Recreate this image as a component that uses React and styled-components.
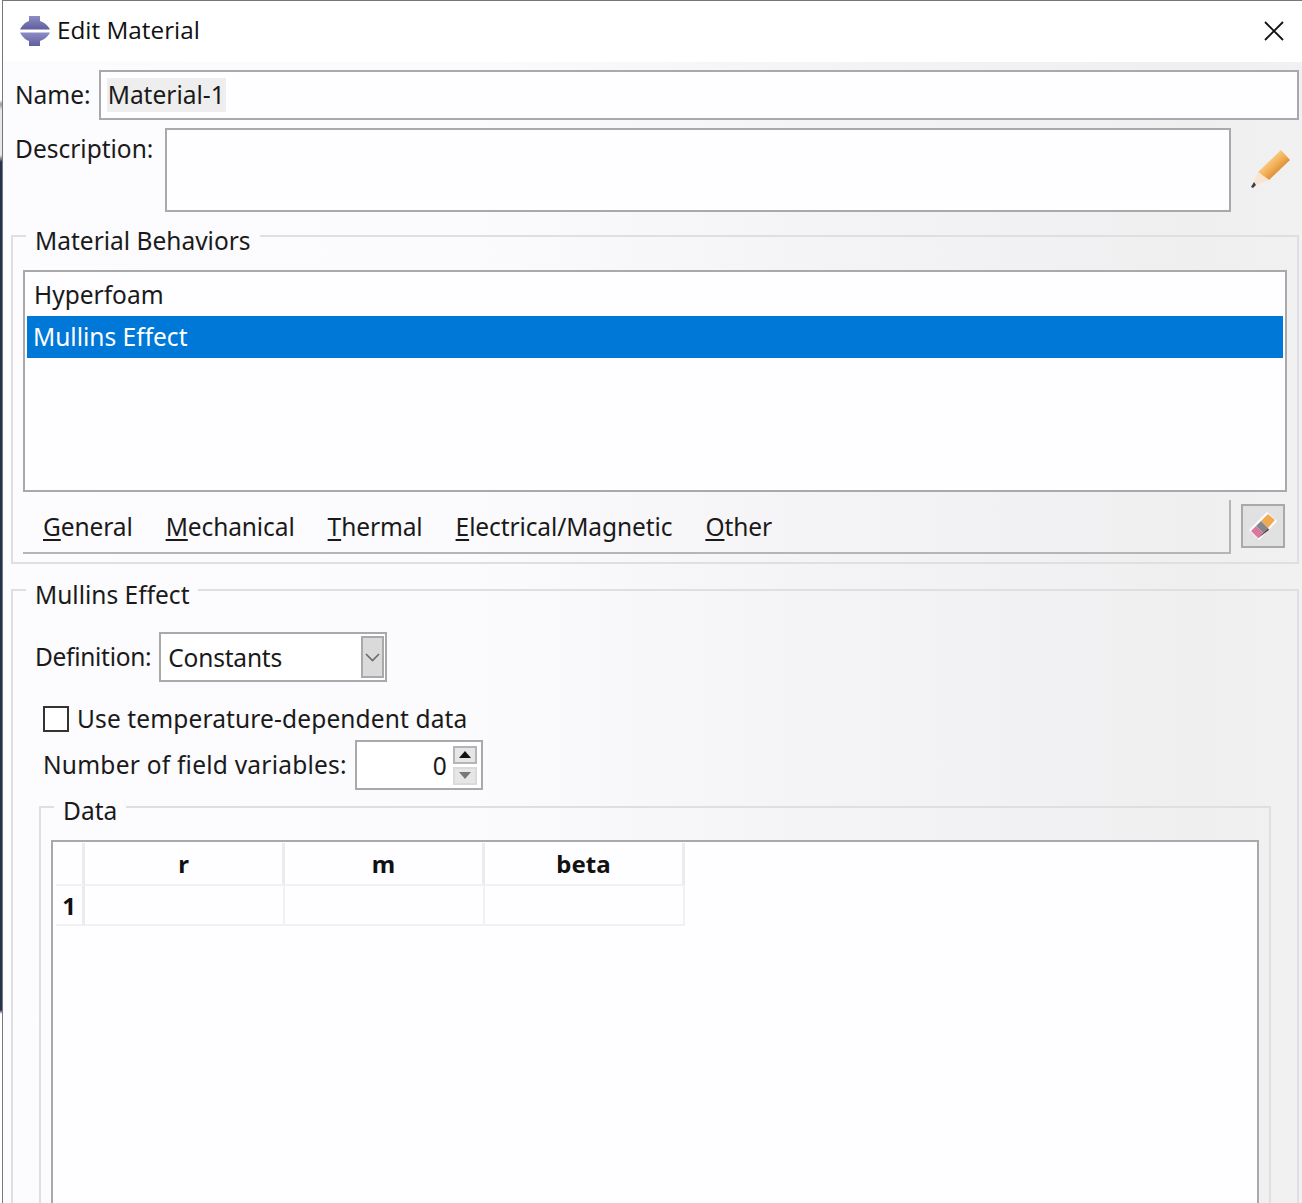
import React from 'react';
import styled, {createGlobalStyle} from 'styled-components';

const GlobalStyle = createGlobalStyle`
  html, body {
    margin: 0;
    padding: 0;
    overflow: hidden;
    background: #ffffff;
  }
  * {
    box-sizing: border-box;
  }
`;

const Page = styled.div`
  display: flex;
  width: 1302px;
  height: 1203px;
  overflow: hidden;
  font-family: "Noto Sans", "Liberation Sans", sans-serif;
  font-size: 24.5px;
  color: #1a1a1a;
`;

const DesktopEdge = styled.div`
  flex: 0 0 2px;
  background: linear-gradient(
    to bottom,
    #ffffff 0,
    #ffffff 100px,
    #9a9a9a 104px,
    #e8e8e8 110px,
    #e8e8e8 155px,
    #27324c 162px,
    #27324c 1010px,
    #ffffff 1014px
  );
`;

const Dialog = styled.div`
  flex: 1;
  display: flex;
  flex-direction: column;
  min-width: 0;
  border-left: 1px solid #77777b;
  border-top: 1px solid #77777b;
`;

const TitleBar = styled.div`
  flex: 0 0 61px;
  display: flex;
  align-items: center;
  padding: 0 18px 1px 17px;
  background: #ffffff;
`;

const Title = styled.div`
  flex: 1;
  margin: 0 0 3px 7px;
  font-family: "Open Sans", "Noto Sans", sans-serif;
  font-size: 24.3px;
  color: #111111;
`;

const Body = styled.div`
  flex: 1;
  display: flex;
  flex-direction: column;
  min-height: 0;
  padding: 8px 3px 0 8px;
  background: linear-gradient(to right, #fcfbfe 0, #fbfafd 36%, #f4f3f6 62%, #efeff0 92%, #f1f1f2 100%);
`;

const FormRow = styled.div`
  display: flex;
  align-items: ${props => props.align || 'center'};
  margin-top: ${props => props.top || 0}px;
  margin-left: ${props => props.indent || 0}px;
`;

const Label = styled.span`
  white-space: nowrap;
  line-height: ${props => props.height || 34}px;
  letter-spacing: ${props => props.spacing || 0}px;
`;

const NameInput = styled.div`
  flex: 1;
  height: 50px;
  margin-left: 8px;
  padding: 6px 6px;
  background: #fefdff;
  border: 2px solid #a9a9ab;
`;

const SelectedText = styled.span`
  display: inline-block;
  height: 34px;
  line-height: 33px;
  padding: 0 1px;
  background: #eeeeee;
`;

const DescriptionInput = styled.div`
  width: 1066px;
  height: 84px;
  margin-left: 12px;
  background: #fefdff;
  border: 2px solid #a9a9ab;
`;

const PencilSlot = styled.div`
  display: flex;
  align-items: center;
  justify-content: center;
  width: 40px;
  height: 84px;
  margin-left: 20px;
`;

const Group = styled.fieldset`
  min-width: 0;
  margin: ${props => props.top || 0}px 0 0 0;
  padding: ${props => props.pad || '0'};
  border: 2px solid #dfdfe1;
  border-bottom-width: ${props => (props.open ? 0 : 2)}px;
`;

const GroupTitle = styled.legend`
  margin-left: ${props => props.offset || 0}px;
  padding: ${props => props.lift || 10}px 9px 0 9px;
  line-height: 24px;
`;

const BehaviorList = styled.div`
  height: 222px;
  padding: 3px 2px;
  background: #fefdff;
  border: 2px solid #a9a9ab;
`;

const BehaviorItem = styled.div`
  height: ${props => (props.selected ? 42 : 41)}px;
  line-height: ${props => (props.selected ? 42 : 40)}px;
  padding-left: ${props => (props.selected ? 6 : 7)}px;
  background: ${props => (props.selected ? '#0078d7' : 'transparent')};
  color: ${props => (props.selected ? '#ffffff' : '#1a1a1a')};
`;

const MenuRow = styled.div`
  display: flex;
  align-items: flex-start;
  margin-top: 8px;
`;

const MenuStrip = styled.div`
  display: flex;
  align-items: center;
  gap: 33px;
  width: 1208px;
  height: 54px;
  padding: 1px 0 0 20px;
  border-right: 2px solid #b5b5b7;
  border-bottom: 2px solid #b5b5b7;
`;

const MenuItem = styled.span`
  line-height: 50px;
  letter-spacing: -0.1px;
`;

const Mnemonic = styled.span`
  text-decoration: underline;
  text-decoration-thickness: 2px;
  text-underline-offset: 3px;
`;

const EraserButton = styled.div`
  display: flex;
  align-items: center;
  justify-content: center;
  width: 44px;
  height: 44px;
  margin: 4px 0 0 10px;
  background: #e1e1e2;
  border: 2px solid #a9a9ab;
`;

const ComboBox = styled.div`
  display: flex;
  align-items: center;
  width: 228px;
  height: 50px;
  margin-left: 8px;
  padding: 2px 1px 2px 7px;
  background: #ffffff;
  border: 2px solid #a9a9ab;
`;

const ComboValue = styled.span`
  flex: 1;
  letter-spacing: -0.2px;
`;

const ComboArrow = styled.div`
  display: flex;
  align-items: center;
  justify-content: center;
  width: 23px;
  height: 42px;
  background: #dadadb;
  border: 2px solid #a9a9ab;
`;

const Checkbox = styled.div`
  flex: 0 0 26px;
  height: 26px;
  margin-right: 8px;
  background: #ffffff;
  border: 2px solid #333333;
`;

const SpinBox = styled.div`
  display: flex;
  align-items: center;
  width: 128px;
  height: 50px;
  margin-left: 8px;
  padding: 0 4px 0 0;
  background: #ffffff;
  border: 2px solid #a9a9ab;
`;

const SpinValue = styled.span`
  flex: 1;
  text-align: right;
  padding-right: 6px;
`;

const SpinButtons = styled.div`
  display: flex;
  flex-direction: column;
  gap: 3px;
  width: 24px;
`;

const SpinButton = styled.div`
  display: flex;
  align-items: center;
  justify-content: center;
  height: 18px;
  background: #e6e6e7;
  border: 2px solid ${props => (props.disabled ? '#dadadb' : '#b5b5b7')};
`;

const TableBox = styled.div`
  height: 400px;
  padding: 1px 3px;
  background: #fefdff;
  border: 2px solid #a9a9ab;
`;

const DataTable = styled.div`
  display: grid;
  grid-template-columns: 29px 200px 200px 200px;
  grid-template-rows: 43px 40px;
  width: 629px;
`;

const HeaderCell = styled.div`
  display: flex;
  align-items: center;
  justify-content: center;
  font-weight: 700;
  font-size: 24px;
  color: #111111;
  border-right: 3px solid #ebebec;
  border-bottom: 2px solid #f1f1f2;
`;

const DataCell = styled.div`
  border-right: 2px solid #f1f1f2;
  border-bottom: 2px solid #f1f1f2;
`;

const AbaqusIcon = () => (
  <svg width="30" height="30" viewBox="0 0 30 30">
    <defs>
      <linearGradient id="abaqusFill" x1="0" y1="0" x2="0" y2="1">
        <stop offset="0" stopColor="#8d8cc4" />
        <stop offset="1" stopColor="#5f5e9f" />
      </linearGradient>
    </defs>
    <path d="M9 0h11v5c3 1 7 3 10 8.500H0c3-5.500 6-7.500 9-8.500z" fill="url(#abaqusFill)" />
    <path d="M0 16.500h30c-3 5.500-7 7.500-10 8.500v5H9v-5c-3-1-6-3-9-8.500z" fill="url(#abaqusFill)" />
  </svg>
);

const CloseIcon = () => (
  <svg width="20" height="20" viewBox="0 0 20 20">
    <path d="M1 1l18 18M19 1L1 19" stroke="#111111" strokeWidth="1.8" fill="none" />
  </svg>
);

const PencilIcon = () => (
  <svg width="40" height="40" viewBox="0 0 40 40">
    <defs>
      <linearGradient id="pencilBody" x1="0.15" y1="0.15" x2="0.85" y2="0.85">
        <stop offset="0.2" stopColor="#fad48f" />
        <stop offset="0.55" stopColor="#f2ab50" />
        <stop offset="0.85" stopColor="#cf8236" />
      </linearGradient>
    </defs>
    <polygon points="30,0 39,10 18,30 7,22" fill="url(#pencilBody)" />
    <polygon points="7,22 18,30 5,35 3,32" fill="#f8e4d0" />
    <polygon points="3,32 5,35 2,38 0,37" fill="#3f3f3f" />
  </svg>
);

const EraserIcon = () => (
  <svg width="30" height="30" viewBox="0 0 30 30">
    <polygon points="19,1 29,10 11,29 1,19" fill="#ffffff" />
    <polygon points="20,3 27,9 20,17 13,10" fill="#efa94e" />
    <polygon points="13,10 20,17 15,22 8,15" fill="#85858f" />
    <polygon points="8,15 15,22 10,27 3,20" fill="#d9779c" />
    <polygon points="20,17 10,27 9,28 21,19" fill="#5a4640" />
  </svg>
);

const Chevron = () => (
  <svg width="15" height="9" viewBox="0 0 15 9">
    <path d="M1 1l6.500 6.500L14 1" stroke="#6a6a6c" strokeWidth="1.6" fill="none" />
  </svg>
);

const Triangle = ({down, color}) => (
  <svg width="12" height="7" viewBox="0 0 12 7">
    <polygon points={down ? '0,0 12,0 6,7' : '6,0 12,7 0,7'} fill={color} />
  </svg>
);

const menus = [
  ['G', 'eneral'],
  ['M', 'echanical'],
  ['T', 'hermal'],
  ['E', 'lectrical/Magnetic'],
  ['O', 'ther'],
];

export default function App() {
  return (
    <Page>
      <GlobalStyle />
      <DesktopEdge />
      <Dialog>
        <TitleBar>
          <AbaqusIcon />
          <Title>Edit Material</Title>
          <CloseIcon />
        </TitleBar>
        <Body>
          <FormRow indent={4}>
            <Label>Name:</Label>
            <NameInput>
              <SelectedText>Material-1</SelectedText>
            </NameInput>
          </FormRow>
          <FormRow align="flex-start" indent={4} top={8}>
            <Label height={42}>Description:</Label>
            <DescriptionInput />
            <PencilSlot>
              <PencilIcon />
            </PencilSlot>
          </FormRow>
          <Group top={7} pad="17px 10px 8px 10px">
            <GroupTitle offset={3}>Material Behaviors</GroupTitle>
            <BehaviorList>
              <BehaviorItem>Hyperfoam</BehaviorItem>
              <BehaviorItem selected>Mullins Effect</BehaviorItem>
            </BehaviorList>
            <MenuRow>
              <MenuStrip>
                {menus.map(([key, rest]) => (
                  <MenuItem key={key}>
                    <Mnemonic>{key}</Mnemonic>
                    {rest}
                  </MenuItem>
                ))}
              </MenuStrip>
              <EraserButton>
                <EraserIcon />
              </EraserButton>
            </MenuRow>
          </Group>
          <Group open top={9} pad="0 26px 0 26px">
            <GroupTitle offset={-13}>Mullins Effect</GroupTitle>
            <FormRow indent={-4} top={25}>
              <Label spacing={-0.3}>Definition:</Label>
              <ComboBox>
                <ComboValue>Constants</ComboValue>
                <ComboArrow>
                  <Chevron />
                </ComboArrow>
              </ComboBox>
            </FormRow>
            <FormRow indent={4} top={20}>
              <Checkbox />
              <Label spacing={0.13}>Use temperature-dependent data</Label>
            </FormRow>
            <FormRow indent={4} top={4}>
              <Label spacing={0.23}>Number of field variables:</Label>
              <SpinBox>
                <SpinValue>0</SpinValue>
                <SpinButtons>
                  <SpinButton>
                    <Triangle color="#111111" />
                  </SpinButton>
                  <SpinButton disabled>
                    <Triangle down color="#777777" />
                  </SpinButton>
                </SpinButtons>
              </SpinBox>
            </FormRow>
            <Group open top={1} pad="17px 10px 0 10px">
              <GroupTitle offset={3} lift={8}>Data</GroupTitle>
              <TableBox>
                <DataTable>
                  <HeaderCell />
                  <HeaderCell>r</HeaderCell>
                  <HeaderCell>m</HeaderCell>
                  <HeaderCell>beta</HeaderCell>
                  <HeaderCell>1</HeaderCell>
                  <DataCell />
                  <DataCell />
                  <DataCell />
                </DataTable>
              </TableBox>
            </Group>
          </Group>
        </Body>
      </Dialog>
    </Page>
  );
}
